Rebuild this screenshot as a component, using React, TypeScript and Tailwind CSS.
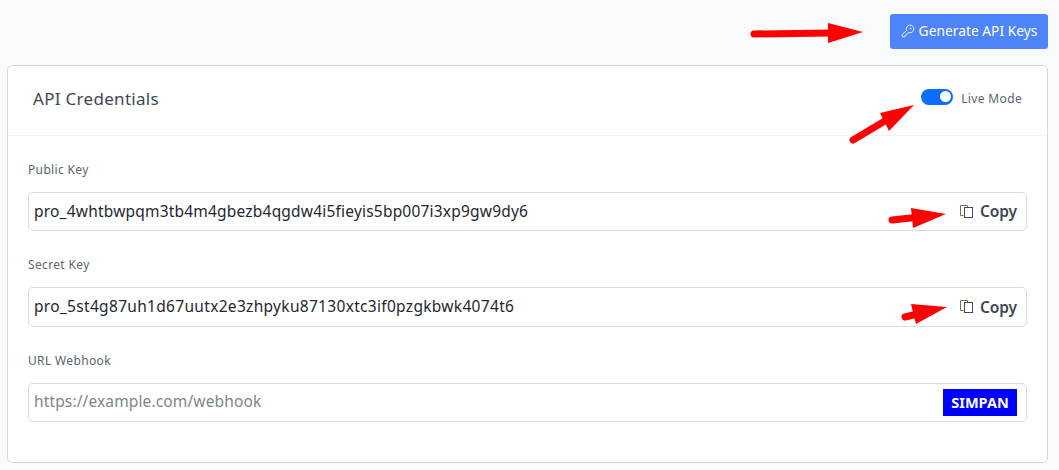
import React from "react";
import { KeyRound } from "lucide-react";

function Arrow({ tail, neck, a, tip, b }: { tail: [number, number]; neck: [number, number]; a: [number, number]; tip: [number, number]; b: [number, number] }) {
  return (
    <>
      <line x1={tail[0]} y1={tail[1]} x2={neck[0]} y2={neck[1]} stroke="#ff0000" strokeWidth={7} strokeLinecap="round" />
      <polygon points={`${a[0]},${a[1]} ${tip[0]},${tip[1]} ${b[0]},${b[1]}`} fill="#ff0000" />
    </>
  );
}

function CopyIcon() {
  return (
    <svg width="14" height="13" viewBox="0 0 14 13" fill="none" className="shrink-0">
      <path d="M3.5 10.5H0.5V0.5H7.5V2.5" stroke="#8a6a45" strokeWidth="1" />
      <rect x="4.5" y="2.5" width="8" height="10" stroke="#3f4a5a" strokeWidth="1" />
    </svg>
  );
}

function KeyField({ label, value, tracking }: { label: string; value: string; tracking: string }) {
  return (
    <div className="flex flex-col">
      <div className="text-[12px] leading-[18px] text-[#5b6470] tracking-[0.35px]">{label}</div>
      <div className="mt-[13px] h-[39.4px] flex items-center justify-between rounded-[5px] border border-[#dcdcdc] bg-white pl-[5px] pr-[9px]">
        <span className={`text-[15.5px] leading-[20px] pb-[2px] text-[#1f2733] ${tracking}`}>{value}</span>
        <span className="flex items-center gap-[6px] text-[15.5px] leading-[20px] pb-[1px] font-semibold text-[#3f4754] tracking-[-0.1px]">
          <CopyIcon />
          Copy
        </span>
      </div>
    </div>
  );
}

export default function App() {
  return (
    <div className="relative w-[1059px] h-[470px] overflow-hidden bg-[#f9fafc] font-['Noto_Sans',sans-serif]">
      <div className="flex justify-end pt-[14px] pr-[11px]">
        <button className="h-[35px] w-[158px] flex items-center justify-center gap-[4px] rounded-[3px] bg-[#4d84f7] text-[13.8px] leading-[20px] pb-[1px] text-white">
          <KeyRound size={14} strokeWidth={1.5} />
          Generate API Keys
        </button>
      </div>

      <div className="mt-[16px] ml-[7px] w-[1041px] h-[398px] rounded-[5px] border border-[#d8d8d8] bg-white">
        <div className="h-[70px] flex items-center justify-between border-b border-[#f3f3f3] pl-[25px] pr-[25px] pb-[3px]">
          <h2 className="text-[17px] text-[#3f4754] tracking-[0.3px]">API Credentials</h2>
          <div className="flex items-center gap-[8px] pb-[5px]">
            <span className="relative block w-[32px] h-[16px] rounded-full bg-[#0d6efd]">
              <span className="absolute right-[2px] top-[2.5px] w-[11px] h-[11px] rounded-full bg-white" />
            </span>
            <span className="text-[12px] text-[#5b6470] pt-[5px] tracking-[0.35px]">Live Mode</span>
          </div>
        </div>

        <div className="px-[20px] pt-[25px] flex flex-col gap-[25px]">
          <KeyField label="Public Key" tracking="tracking-[0.2px]" value="pro_4whtbwpqm3tb4m4gbezb4qgdw4i5fieyis5bp007i3xp9gw9dy6" />
          <KeyField label="Secret Key" tracking="tracking-[0.31px]" value="pro_5st4g87uh1d67uutx2e3zhpyku87130xtc3if0pzgkbwk4074t6" />
          <div className="flex flex-col">
            <div className="text-[12px] leading-[18px] text-[#5b6470] tracking-[0.35px]">URL Webhook</div>
            <div className="mt-[13px] h-[39.4px] flex items-center justify-between rounded-[5px] border border-[#dcdcdc] bg-white pl-[5px] pr-[9px]">
              <span className="text-[15.5px] leading-[20px] pb-[2px] text-[#7d8590] tracking-[0.13px]">https://example.com/webhook</span>
              <button className="w-[74px] h-[27px] bg-[#0000ff] text-white text-[14.5px] font-bold">SIMPAN</button>
            </div>
          </div>
        </div>
      </div>

      <svg className="absolute inset-0 pointer-events-none" width="1059" height="470" viewBox="0 0 1059 470">
        <Arrow tail={[754, 34]} neck={[830, 33]} a={[828, 23]} tip={[863, 32]} b={[828, 43]} />
        <Arrow tail={[853, 140]} neck={[890, 118]} a={[880, 113]} tip={[914, 105]} b={[889, 131]} />
        <Arrow tail={[892, 220]} neck={[920, 217]} a={[911, 208]} tip={[946, 214]} b={[913, 228]} />
        <Arrow tail={[905, 317]} neck={[922, 313]} a={[911, 304]} tip={[947, 307]} b={[916, 324]} />
      </svg>
    </div>
  );
}
